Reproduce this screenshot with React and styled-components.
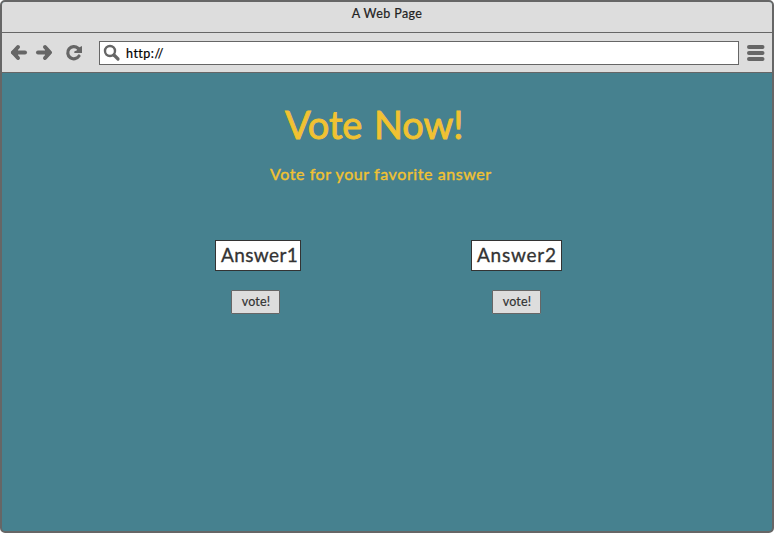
import React from "react";
import styled, { createGlobalStyle } from "styled-components";

const GlobalStyle = createGlobalStyle`
  * { box-sizing: border-box; }
  html, body { margin: 0; background: #fff; overflow: hidden; }
  body, button, input { font-family: Lato, "Open Sans", sans-serif; }
`;

const Window = styled.div`
  width: 774px;
  height: 533px;
  border: 2px solid #666;
  border-radius: 5px;
  background: #46818f;
  overflow: hidden;
  display: flex;
  flex-direction: column;
`;

const TitleBar = styled.div`
  height: 31px;
  background: #ddd;
  border-bottom: 1px solid #666;
  text-align: center;
  padding-top: 4px;
  font-size: 12.5px;
  line-height: 16px;
  letter-spacing: 0.4px;
  color: #222;
  -webkit-text-stroke: 0.2px #222;
`;

const Toolbar = styled.div`
  height: 40px;
  background: #ddd;
  border-bottom: 1px solid #666;
  display: flex;
  align-items: flex-start;
  padding: 8px 0 0 8px;
`;

const Icon = styled.svg`
  display: block;
  flex: none;
  width: ${(p) => p.$w}px;
  height: 24px;
  margin-right: ${(p) => p.$gap || 0}px;
`;

const Address = styled.div`
  flex: none;
  width: 640px;
  height: 24px;
  background: #fff;
  border: 1px solid #666;
  display: flex;
  align-items: center;
  padding-left: 3px;
  margin-right: 7px;
  color: #000;
  -webkit-text-stroke: 0.2px #000;
`;

const Url = styled.span`
  padding-top: 2px;
  font-size: 12.5px;
  line-height: 22px;
  letter-spacing: 0.5px;
`;

const Content = styled.main`
  flex: 1;
  display: flex;
  flex-direction: column;
`;

const Heading = styled.h1`
  margin: 27px 0 0 283px;
  font-size: 38px;
  line-height: 48px;
  font-weight: 400;
  letter-spacing: -0.1px;
  word-spacing: 2px;
  white-space: nowrap;
  color: #f1c232;
  -webkit-text-stroke: 0.9px #f1c232;
`;

const Subheading = styled.p`
  margin: 16px 0 0 268px;
  font-size: 16px;
  line-height: 20px;
  letter-spacing: 0.58px;
  white-space: nowrap;
  color: #f1c232;
  -webkit-text-stroke: 0.4px #f1c232;
`;

const Choices = styled.div`
  display: flex;
  margin: 56px 0 0 213px;
`;

const Choice = styled.section`
  width: ${(p) => p.$width}px;
  margin-right: 170px;
  display: flex;
  flex-direction: column;
  align-items: flex-start;
`;

const Answer = styled.div`
  width: 100%;
  height: 31px;
  padding-left: 5px;
  background: #fff;
  border: 1px solid #333;
  font-size: 19px;
  line-height: 27px;
  letter-spacing: ${(p) => p.$track}px;
  white-space: nowrap;
  color: #333;
  -webkit-text-stroke: 0.3px #333;
`;

const VoteButton = styled.button`
  width: 49px;
  height: 24px;
  margin: 19px 0 0 ${(p) => p.$indent}px;
  padding: 0 0 0 1px;
  background: #ddd;
  border: 1px solid #666;
  border-radius: 1px;
  font-size: 12.5px;
  line-height: 20px;
  letter-spacing: 0.2px;
  color: #333;
  -webkit-text-stroke: 0.2px #333;
`;

const choices = [
  { label: "Answer1", width: 86, indent: 16, track: 0.4 },
  { label: "Answer2", width: 91, indent: 21, track: 0.75 },
];

const line = { fill: "none", stroke: "#666", strokeLinecap: "round", strokeLinejoin: "round" };

export default function App() {
  return (
    <>
      <GlobalStyle />
      <Window>
        <TitleBar>A Web Page</TitleBar>
        <Toolbar>
          <Icon $w={18} $gap={7} viewBox="0 0 18 24">
            <path d="M3 11.5H15" {...line} strokeWidth="4" />
            <path d="M8 6L3 11.5L8 17" {...line} strokeWidth="4" />
            <path d="M1 11.5L8 4.5V18.5Z" fill="#666" />
          </Icon>
          <Icon $w={18} $gap={12} viewBox="0 0 18 24">
            <path d="M3 11.5H14" {...line} strokeWidth="4" />
            <path d="M10 6L15 11.5L10 17" {...line} strokeWidth="4" />
            <path d="M17 11.5L10 4.5V18.5Z" fill="#666" />
          </Icon>
          <Icon $w={18} $gap={16} viewBox="0 0 18 24">
            <path d="M13 7.2A6.1 6.1 0 1 0 14 15" {...line} strokeWidth="3.2" />
            <path d="M17 5V12H9.3V10.5L12 9.3L13 7Z" fill="#666" />
          </Icon>
          <Address>
            <Icon $w={18} $gap={5} viewBox="0 0 18 24">
              <circle cx="7" cy="10" r="5" {...line} strokeWidth="2.4" />
              <path d="M11 14L15 18" {...line} strokeWidth="3.2" />
            </Icon>
            <Url>http://</Url>
          </Address>
          <Icon $w={20} viewBox="0 0 20 24">
            <path d="M3 6H16.5M3 12H16.5M3 18H16.5" {...line} strokeWidth="4" />
          </Icon>
        </Toolbar>
        <Content>
          <Heading>Vote Now!</Heading>
          <Subheading>Vote for your favorite answer</Subheading>
          <Choices>
            {choices.map((c) => (
              <Choice key={c.label} $width={c.width}>
                <Answer $track={c.track}>{c.label}</Answer>
                <VoteButton $indent={c.indent}>vote!</VoteButton>
              </Choice>
            ))}
          </Choices>
        </Content>
      </Window>
    </>
  );
}
